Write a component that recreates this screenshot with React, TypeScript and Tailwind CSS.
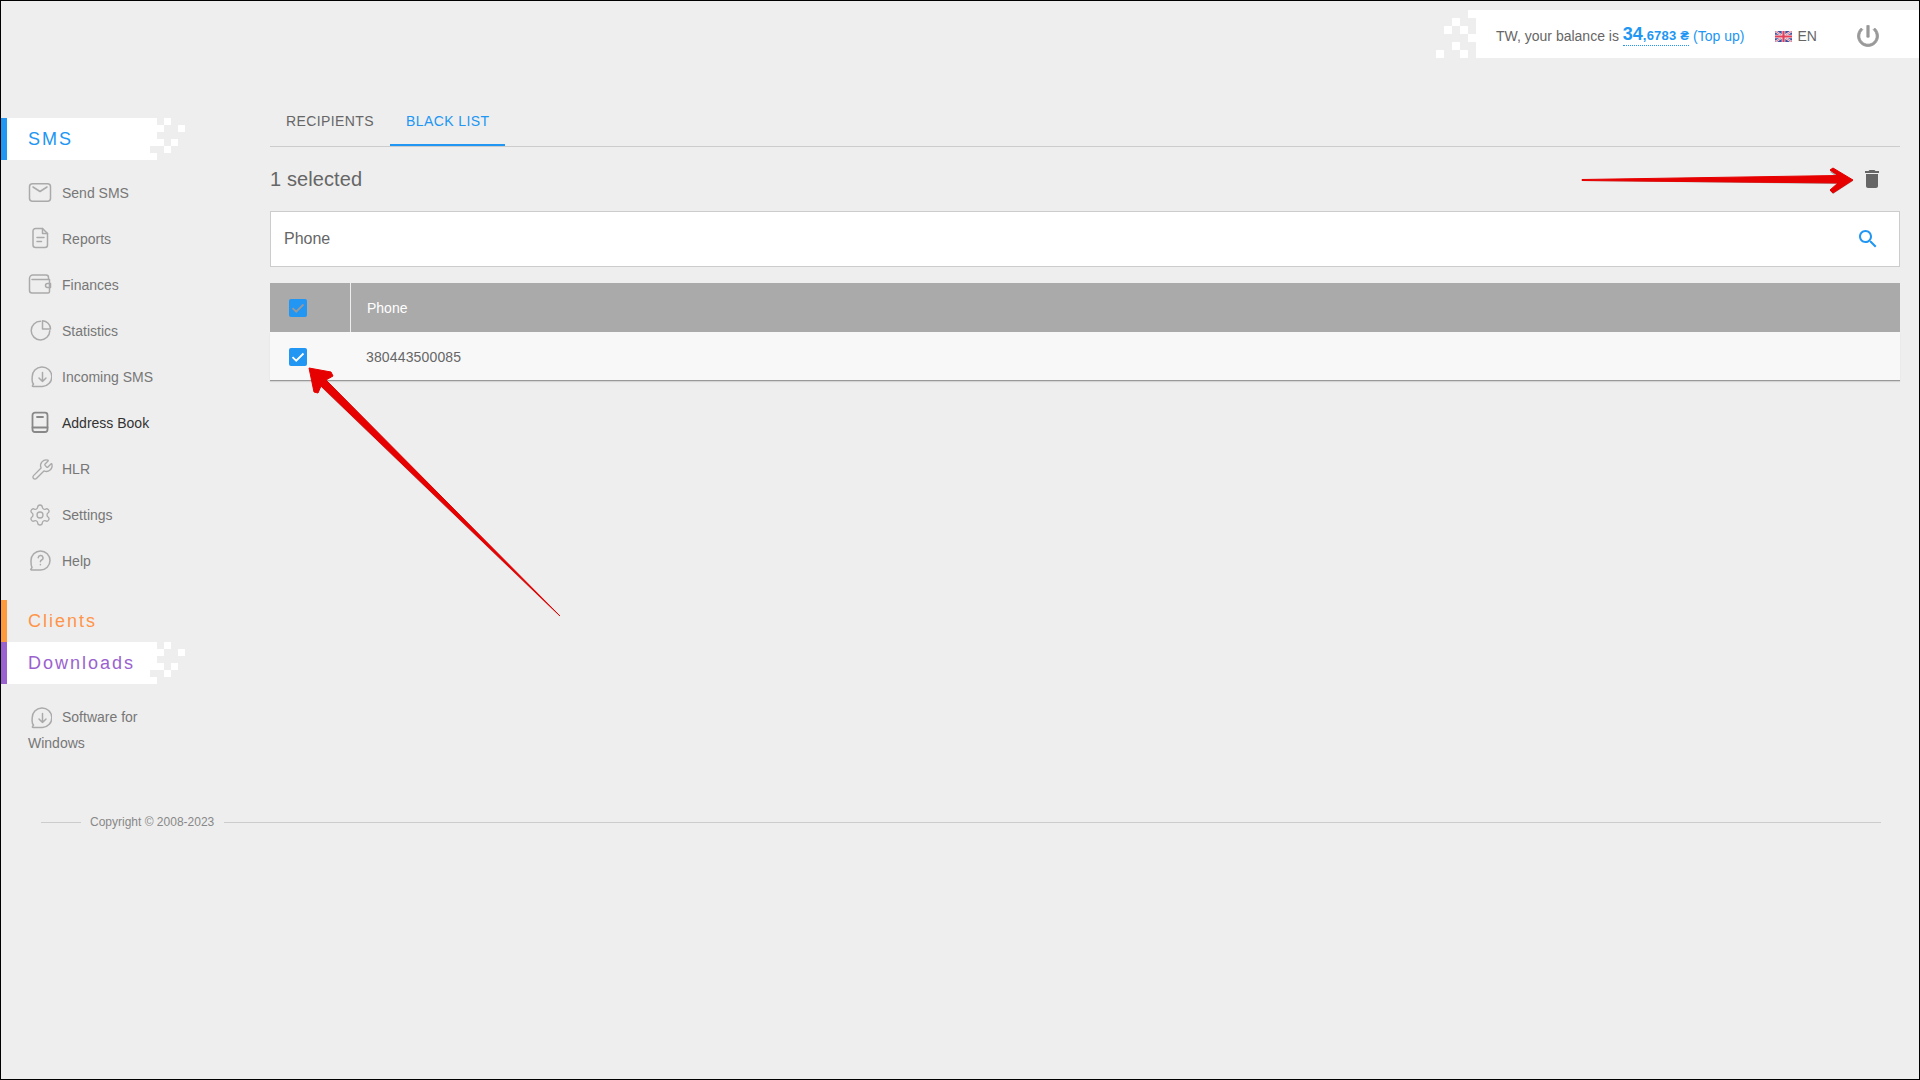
import React from "react";
import { Wrench, Settings } from "lucide-react";

function TopDeco() {
  const r = [[1468,10,8,8],[1452,18,8,8],[1444,26,8,8],[1460,26,8,8],[1452,42,8,8],[1436,50,8,8],[1460,50,8,8],[1468,34,8,8]];
  return (
    <svg width="40" height="48" viewBox="1436 10 40 48" className="absolute right-full top-0">
      {r.map((q, i) => (
        <rect key={i} x={q[0]} y={q[1]} width={q[2]} height={q[3]} fill="#fff" />
      ))}
    </svg>
  );
}

function SideDeco() {
  return (
    <svg width="42" height="42" viewBox="0 0 42 42" className="absolute left-[149px] top-0">
      <rect x="0" y="0" width="7" height="7" fill="#fff" />
      <rect x="14" y="0" width="7" height="7" fill="#fff" />
      <rect x="0" y="7" width="14" height="7" fill="#fff" />
      <rect x="28" y="7" width="7" height="7" fill="#fff" />
      <rect x="0" y="14" width="7" height="7" fill="#fff" />
      <rect x="0" y="21" width="14" height="7" fill="#fff" />
      <rect x="21" y="21" width="7" height="7" fill="#fff" />
      <rect x="14" y="28" width="7" height="7" fill="#fff" />
      <rect x="0" y="35" width="7" height="7" fill="#fff" />
    </svg>
  );
}

function SideHead({ title, bar, text, active }: { title: string; bar: string; text: string; active?: boolean }) {
  return (
    <div className="relative flex h-[42px] w-[149px]">
      <div className={"w-[6px] shrink-0 " + bar} />
      <div className={"flex flex-1 items-center whitespace-nowrap pl-[21px] text-[18px] tracking-[2px] " + text + (active ? " bg-white" : "")}>
        {title}
      </div>
      {active && <SideDeco />}
    </div>
  );
}

const ico = "shrink-0";
function Ic({ children, color = "#aaa", sw = 1.5 }: { children: React.ReactNode; color?: string; sw?: number }) {
  return (
    <svg width="24" height="24" viewBox="0 0 24 24" fill="none" stroke={color} strokeWidth={sw} strokeLinecap="round" strokeLinejoin="round" className={ico}>
      {children}
    </svg>
  );
}

const Bubble = () => (
  <path d="M14.500 21.500H5.200c-.8 0-1-.6-.6-1.100l.9-1.400C3.400 17.200 4.200 15 4.200 12a9.800 9.800 0 1 1 10.300 9.500z" />
);

const items: { label: string; icon: React.ReactNode; dark?: boolean }[] = [
  {
    label: "Send SMS",
    icon: (
      <Ic>
        <rect x="1.500" y="2.700" width="21" height="17.600" rx="3" />
        <path d="M5 6l7 4.500L19 6" />
      </Ic>
    ),
  },
  {
    label: "Reports",
    icon: (
      <Ic>
        <path d="M7.500 1.500h7l5 5v11.500a2.500 2.500 0 0 1-2.500 2.500H7.500A2.500 2.500 0 0 1 5 18V4a2.500 2.500 0 0 1 2.500-2.500z" />
        <path d="M14.500 1.500v5h5M9 10.500h7M9 14.500h4.500" />
      </Ic>
    ),
  },
  {
    label: "Finances",
    icon: (
      <Ic>
        <path d="M20.500 6.500V4.500A2.500 2.500 0 0 0 18 2H5a3.500 3.500 0 0 0-3.500 3.500V17.500A2.500 2.500 0 0 0 4 20h16a1.500 1.500 0 0 0 1.500-1.500V6.500H4" />
        <path d="M22.500 10.500h-3a2 2 0 0 0 0 4h3z" />
      </Ic>
    ),
  },
  {
    label: "Statistics",
    icon: (
      <Ic>
        <path d="M12.500 2.300a9.300 9.300 0 1 0 9.300 9.500" />
        <path d="M14.500 1.800v8.200h8a8.500 8.500 0 0 0-8-8.200z" />
      </Ic>
    ),
  },
  {
    label: "Incoming SMS",
    icon: (
      <Ic>
        <Bubble />
        <path d="M14.500 7.500v9M11 13l3.500 3.500L18 13" />
      </Ic>
    ),
  },
  {
    label: "Address Book",
    dark: true,
    icon: (
      <Ic color="#888" sw={1.800}>
        <rect x="4.500" y="1.700" width="15" height="19.300" rx="2.500" />
        <path d="M4.500 16.500h15M9 6h6" />
      </Ic>
    ),
  },
  {
    label: "HLR",
    icon: (
      <span className="flex w-[24px] shrink-0 justify-end">
        <Wrench size={23} color="#aaa" strokeWidth={1.400} className="mr-[-2px]" />
      </span>
    ),
  },
  {
    label: "Settings",
    icon: <Settings size={24} color="#aaa" strokeWidth={1.300} className={ico} />,
  },
  {
    label: "Help",
    icon: (
      <Ic>
        <path d="M12.500 21H3.500c-.7 0-.9-.5-.5-1l1-1.500C2.800 16.800 3 14.500 3 11.500a9.500 9.500 0 1 1 9.500 9.500z" />
        <path d="M10.200 8.700a2.400 2.400 0 1 1 3.400 2.300c-.8.400-1.200.9-1.200 1.700M12.400 15.500v.3" />
      </Ic>
    ),
  },
];

function Check({ color }: { color: string }) {
  return (
    <span className="flex h-[18px] w-[18px] items-center justify-center rounded-[2px] bg-[#2196f3]">
      <svg width="18" height="18" viewBox="0 0 18 18" fill="none">
        <path d="M3.500 9.200l3.700 3.500 7.300-7.200" stroke={color} strokeWidth="1.800" />
      </svg>
    </span>
  );
}

function Flag() {
  return (
    <svg width="17" height="11" viewBox="0 0 17 11" className="shrink-0">
      <rect width="17" height="11" fill="#3f4fa0" />
      <path d="M0 0L17 11M17 0L0 11" stroke="#eee" strokeWidth="2.200" />
      <path d="M0 0L17 11M17 0L0 11" stroke="#e5506b" strokeWidth="0.800" />
      <path d="M8.500 0V11M0 5.500H17" stroke="#eee" strokeWidth="3.600" />
      <path d="M8.500 0V11M0 5.500H17" stroke="#e5405b" strokeWidth="2.200" />
    </svg>
  );
}

export default function App() {
  return (
    <div className="relative flex h-[1080px] w-full flex-col overflow-hidden border border-black bg-[#eeeeee] font-['Liberation_Sans',Arial,sans-serif] text-[14px] text-[#666]">
      <header className="flex h-[57px] shrink-0 justify-end pt-[9px]">
        <div className="relative flex h-[48px] w-[443px] items-center bg-white pl-[20px] pt-[3px]">
          <TopDeco />
          <span className="pt-[2px]">TW, your balance is&nbsp;</span>
          <span className="border-b border-dotted border-[#2196f3] font-bold leading-[19px] text-[#2196f3]">
            <span className="text-[18px]">34</span>
            <span className="text-[13px] tracking-[0.2px]">,6783 ₴</span>
          </span>
          <span className="ml-[4px] pt-[2px] text-[#2196f3]">(Top up)</span>
          <span className="ml-[31px] mr-[5px] flex items-center pt-[1px]">
            <Flag />
          </span>
          <span className="pt-[2px]">EN</span>
          <svg width="28" height="28" viewBox="0 0 24 24" fill="#999" stroke="#999" strokeWidth="0.700" className="ml-[37px]">
            <path d="M13 3h-2v10h2V3zm4.830 2.170l-1.420 1.420C17.990 7.860 19 9.810 19 12c0 3.870-3.130 7-7 7s-7-3.130-7-7c0-2.190 1.010-4.140 2.580-5.420L6.170 5.170C4.230 6.820 3 9.260 3 12c0 4.970 4.030 9 9 9s9-4.030 9-9c0-2.740-1.230-5.180-3.170-6.830z" />
          </svg>
        </div>
      </header>

      <div className="flex shrink-0">
        <aside className="w-[269px] shrink-0 pt-[60px]">
          <SideHead title="SMS" bar="bg-[#2196f3]" text="text-[#2196f3]" active />
          <nav className="mt-[10px] mb-[16px]">
            {items.map((it) => (
              <div key={it.label} className={"flex h-[46px] items-center gap-[10px] pl-[27px] " + (it.dark ? "text-[#333]" : "text-[#777]")}>
                {it.icon}
                <span>{it.label}</span>
              </div>
            ))}
          </nav>
          <SideHead title="Clients" bar="bg-[#ff9a3c]" text="text-[#ff9448]" />
          <SideHead title="Downloads" bar="bg-[#9a62cf]" text="text-[#9a62cf]" active />
          <div className="mt-[20px] w-[170px] pl-[27px] leading-[26px] text-[#777]">
            <span className="mr-[10px] inline-block align-middle">
              <Ic>
                <Bubble />
                <path d="M14.500 7.500v9M11 13l3.500 3.500L18 13" />
              </Ic>
            </span>
            Software for Windows
          </div>
        </aside>

        <main className="min-w-0 flex-1 pr-[19px] pt-[40px]">
          <div className="flex h-[49px] border-b border-[#ccc] tracking-[0.4px]">
            <div className="flex h-[48px] items-center px-[16px] pb-[2px]">RECIPIENTS</div>
            <div className="flex h-[48px] items-center border-b-2 border-[#2196f3] px-[16px] text-[#2196f3]">BLACK LIST</div>
          </div>
          <div className="flex h-[64px] items-center justify-between pr-[16px]">
            <span className="text-[20px] tracking-[0.1px]">1 selected</span>
            <svg width="24" height="24" viewBox="0 0 24 24" fill="#666">
              <path d="M6 19c0 1.100.9 2 2 2h8c1.100 0 2-.9 2-2V7H6v12zM19 4h-3.500l-1-1h-5l-1 1H5v2h14V4z" />
            </svg>
          </div>
          <div className="flex h-[56px] items-center justify-between border border-[#ccc] bg-white pl-[13px] pr-[19px] text-[16px]">
            <span>Phone</span>
            <svg width="24" height="24" viewBox="0 0 24 24" fill="#2196f3">
              <path d="M15.500 14h-.79l-.28-.27C15.410 12.590 16 11.110 16 9.500 16 5.910 13.090 3 9.500 3S3 5.910 3 9.500 5.910 16 9.500 16c1.610 0 3.090-.59 4.230-1.570l.27.28v.79l5 4.990L20.490 19l-4.990-5zm-6 0C7.010 14 5 11.990 5 9.500S7.010 5 9.500 5 14 7.010 14 9.500 11.990 14 9.500 14z" />
            </svg>
          </div>
          <div className="mt-[16px]">
            <div className="flex h-[49px] items-center bg-[#aaaaaa] text-white">
              <div className="flex h-full w-[80px] items-center pl-[19px] pt-[1px]">
                <Check color="#999" />
              </div>
              <div className="h-full w-px bg-[#eee]" />
              <div className="pl-[16px] pt-[2px]">Phone</div>
            </div>
            <div className="flex h-[49px] items-center border-b border-[#999] bg-[#f8f8f8] pt-[2px] shadow-[0_1px_1px_rgba(0,0,0,0.1)]">
              <div className="flex w-[80px] items-center pl-[19px]">
                <Check color="#fff" />
              </div>
              <div className="pl-[16px] tracking-[0.15px]">380443500085</div>
            </div>
          </div>
        </main>
      </div>

      <footer className="mt-[57px] flex items-center pl-[40px] pr-[38px] text-[12px] text-[#888]">
        <div className="h-px w-[40px] bg-[#ccc]" />
        <span className="ml-[9px] mr-[10px]">Copyright © 2008-2023</span>
        <div className="h-px flex-1 bg-[#ccc]" />
      </footer>

      <svg width="1920" height="1080" viewBox="0 0 1920 1080" className="pointer-events-none absolute left-[-1px] top-[-1px]">
        <polygon points="1582,181 1838,184 1830,191 1833,194 1853,181 1833,169 1830,172 1838,178" fill="#666" opacity="0.5" />
        <polygon points="1582,179.500 1838,175.500 1830,170 1833,168 1853,180 1833,193 1830,190 1838,183 1582,180.500" fill="#e60000" stroke="#e60000" strokeWidth="1" strokeLinejoin="round" />
        <polygon points="321,387 560,617 327,381" fill="#666" opacity="0.5" />
        <polygon points="309,368 331,372 333,376 326,380 560,616 321,386 318,393 314,392" fill="#e60000" stroke="#e60000" strokeWidth="1" strokeLinejoin="round" />
      </svg>
    </div>
  );
}
